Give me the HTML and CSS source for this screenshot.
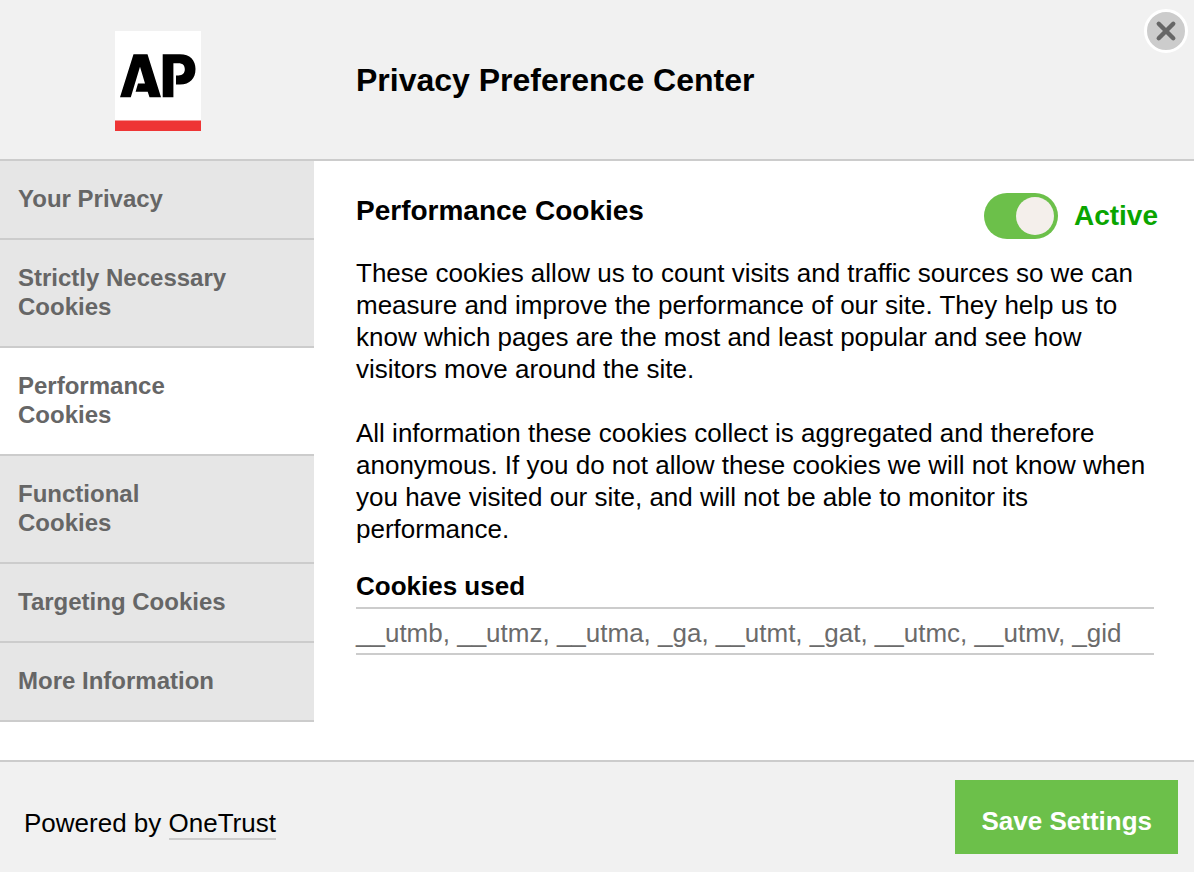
FILE: index.html
```html
<!DOCTYPE html>
<html lang="en">
<head>
<meta charset="utf-8">
<meta name="viewport" content="width=device-width, initial-scale=1">
<title>Privacy Preference Center</title>
<link rel="stylesheet" href="styles.css">
</head>
<body>
<div class="dialog" role="dialog" aria-labelledby="dialog-title">
  <header class="header">
    <div class="brand">
      <svg class="logo" viewBox="0 0 86 100" role="img" aria-label="AP">
        <rect width="86" height="100" fill="#fff"/>
        <rect y="89.500" width="86" height="10.500" fill="#ee3535"/>
        <path d="M5 66.300 18.500 23.200H32.500L46 66.300H34.500L32.700 60.700H20.600L23 52.400H30L25 35.700 15.800 66.300Z" fill="#000"/>
        <path d="M47.700 23.200H65C75 23.200 80.500 29 80.500 38C80.500 47.500 75 53.500 65 53.500H61V44.500H63.500C67.500 44.500 69.800 42.200 69.800 38.300C69.800 34.200 67.500 32.200 63.500 32.200H58.400V66.300H47.700Z" fill="#000"/>
      </svg>
    </div>
    <h1 class="title" id="dialog-title">Privacy Preference Center</h1>
    <button class="close" type="button" aria-label="Close">
      <svg class="close-icon" viewBox="0 0 20 20" aria-hidden="true">
        <path d="M3.400 3.400 16.600 16.600M16.600 3.400 3.400 16.600" stroke="#666" stroke-width="4" stroke-linecap="round"/>
      </svg>
    </button>
  </header>
  <div class="body">
    <nav class="menu" aria-label="Cookie categories">
      <button class="menu-item" type="button">Your Privacy</button>
      <button class="menu-item" type="button">Strictly Necessary Cookies</button>
      <button class="menu-item menu-item-active" type="button" aria-current="true">Performance Cookies</button>
      <button class="menu-item" type="button">Functional Cookies</button>
      <button class="menu-item" type="button">Targeting Cookies</button>
      <button class="menu-item" type="button">More Information</button>
    </nav>
    <main class="content">
      <div class="content-head">
        <h2 class="heading">Performance Cookies</h2>
        <label class="toggle">
          <input class="switch" type="checkbox" role="switch" checked>
          <span class="toggle-label">Active</span>
        </label>
      </div>
      <p class="text">These cookies allow us to count visits and traffic sources so we can measure and improve the performance of our site. They help us to know which pages are the most and least popular and see how visitors move around the site.</p>
      <p class="text">All information these cookies collect is aggregated and therefore anonymous. If you do not allow these cookies we will not know when you have visited our site, and will not be able to monitor its performance.</p>
      <h3 class="subheading">Cookies used</h3>
      <p class="cookie-list">__utmb, __utmz, __utma, _ga, __utmt, _gat, __utmc, __utmv, _gid</p>
    </main>
  </div>
  <footer class="footer">
    <p class="powered">Powered by <a class="powered-link" href="#">OneTrust</a></p>
    <button class="save" type="button">Save Settings</button>
  </footer>
</div>
</body>
</html>
```
FILE: styles.css
```css
* {
  box-sizing: border-box;
}

body {
  margin: 0;
  background: #fff;
  color: #000;
  font-family: "Liberation Sans", Arial, sans-serif;
  font-size: 26px;
  line-height: 32px;
}

h1, h2, h3, p {
  margin: 0;
}

button {
  margin: 0;
  border: 0;
  font-family: inherit;
  cursor: pointer;
}

.dialog {
  display: flex;
  flex-direction: column;
  min-height: 100vh;
}

.header {
  position: relative;
  display: flex;
  align-items: center;
  padding: 31px 0 28px;
  border-bottom: 2px solid #ccc;
  background: #f1f1f1;
}

.brand {
  display: flex;
  justify-content: center;
  width: 316px;
}

.logo {
  display: block;
  width: 86px;
  height: 100px;
}

.title {
  padding: 0 0 2px 40px;
  font-size: 32px;
  line-height: 40px;
}

.close {
  position: absolute;
  top: 9px;
  right: 6px;
  display: flex;
  align-items: center;
  justify-content: center;
  width: 44px;
  height: 44px;
  padding: 0;
  border: 3px solid #fff;
  border-radius: 50%;
  background: #ccc;
}

.close-icon {
  width: 22px;
  height: 22px;
}

.body {
  display: flex;
  flex: 1;
}

.menu {
  flex: 0 0 314px;
}

.menu-item {
  display: block;
  width: 100%;
  padding: 23px 80px 25px 18px;
  border-bottom: 2px solid #ccc;
  background: #e6e6e6;
  color: #666;
  font-size: 24px;
  font-weight: bold;
  line-height: 29px;
  text-align: left;
}

.menu-item-active {
  background: #fff;
}

.content {
  flex: 1;
  padding: 32px 40px 40px 42px;
}

.content-head {
  display: flex;
  align-items: flex-start;
  justify-content: space-between;
  margin: 0 -4px 18px 0;
}

.heading {
  padding-top: 2px;
  font-size: 28px;
  line-height: 32px;
}

.toggle {
  display: flex;
  align-items: center;
  gap: 16px;
}

.switch {
  display: flex;
  align-items: center;
  justify-content: flex-end;
  width: 74px;
  height: 46px;
  margin: 0;
  padding: 4px;
  border-radius: 23px;
  background: #6cc04a;
  appearance: none;
}

.switch::before {
  width: 38px;
  height: 38px;
  border-radius: 50%;
  background: #f4efeb;
  content: "";
}

.switch:not(:checked) {
  justify-content: flex-start;
  background: #ccc;
}

.toggle-label {
  color: #0aa500;
  font-size: 28px;
  font-weight: bold;
}

.text {
  margin-bottom: 32px;
}

.subheading {
  margin-top: -8px;
  padding-bottom: 4px;
  font-size: 26px;
  line-height: 34px;
}

.cookie-list {
  padding: 8px 0 4px;
  border-top: 2px solid #ccc;
  border-bottom: 2px solid #ccc;
  color: #6b6b6b;
}

.footer {
  display: flex;
  align-items: center;
  justify-content: space-between;
  padding: 18px 16px 18px 24px;
  border-top: 2px solid #ccc;
  background: #f1f1f1;
}

.powered {
  padding-top: 12px;
}

.powered-link {
  border-bottom: 2px solid #ccc;
  color: inherit;
  text-decoration: none;
}

.save {
  padding: 25px 26px 17px;
  background: #6cc04a;
  color: #fff;
  font-size: 26px;
  font-weight: bold;
  line-height: 32px;
}
```
